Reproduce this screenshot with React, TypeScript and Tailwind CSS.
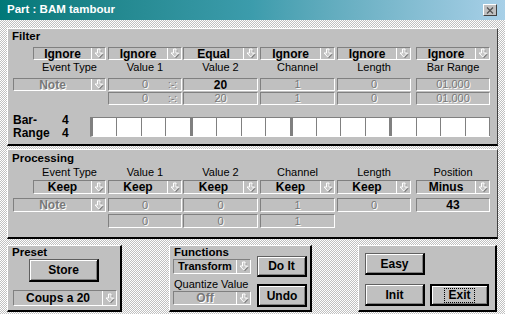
import React from "react";

const DIS = "text-[#787878] [text-shadow:1px_1px_0_#fff]";
const SUNK = "border border-[#808080] border-b-white border-r-white";

// column slots shared by every row of the Filter / Processing grids
const C = [
  "ml-[25px] w-[73px]",
  "ml-[2px] w-[74px]",
  "ml-[1px] w-[75px]",
  "ml-[2px] w-[75px]",
  "ml-[2px] w-[74px]",
  "ml-[5px] w-[74px]",
];

function Arrow() {
  return (
    <svg width="10" height="11" viewBox="0 0 10 11">
      <path d="M4 1.5h2.5v4h2.5l-3.75 4-3.75-4H4z" fill="#808080" transform="translate(0.8,0.8)" />
      <path d="M3.5 1h2.5v4h2.5l-3.75 4L1 5h2.5z" fill="#c8c8c8" stroke="#fff" strokeWidth="1" />
    </svg>
  );
}

function Drop({ text, className = "", off, small }: { text: string; className?: string; off?: boolean; small?: boolean }) {
  return (
    <div className={`flex bg-[#c0c0c0] ${SUNK} ${className}`}>
      <div
        className={`flex-1 flex items-center justify-center leading-none font-bold ${off ? DIS : ""} ${small ? "text-[11px]" : "text-[12px]"}`}
      >
        {text}
      </div>
      <div className="w-[14px] flex items-center justify-center border-l border-white">
        <Arrow />
      </div>
    </div>
  );
}

function Cell({ t, className = "", bold, suffix }: { t: string; className?: string; bold?: boolean; suffix?: boolean }) {
  return (
    <div
      className={`relative flex items-center justify-center leading-none ${SUNK} ${className} ${bold ? "font-bold text-[12px]" : `text-[11px] ${DIS}`}`}
    >
      {t}
      {suffix && <span className={`absolute right-[4px] text-[10px] ${DIS}`}>:-:</span>}
    </div>
  );
}

function Btn({ t, className = "", def, focus }: { t: string; className?: string; def?: boolean; focus?: boolean }) {
  return (
    <div
      className={`flex items-center justify-center font-bold text-[12px] bg-[#c0c0c0] shadow-[inset_1px_1px_0_#fff,inset_-1px_-1px_0_#808080] ${def ? "border-2 border-black" : "border border-[#606060] border-r-2 border-b-2 border-r-black border-b-black"} ${className}`}
    >
      {focus ? <span className="outline-1 outline-dotted outline-black px-[3px] leading-[13px]">{t}</span> : t}
    </div>
  );
}

const PANEL = "bg-[#c0c0c0] border border-white border-r-[#404040] border-b-2 border-b-black";

export default function App() {
  const barCells = Array.from({ length: 16 });
  return (
    <div className="w-[505px] h-[314px] overflow-hidden font-['Liberation_Sans',Arial,sans-serif] text-black bg-[#dcdcdc] bg-[image:repeating-conic-gradient(#c0c0c0_0%_25%,#ffffff_0%_50%)] bg-[length:2px_2px]">
      {/* title bar */}
      <div className="h-[20px] flex items-center justify-between pl-[7px] pr-[8px] bg-linear-to-r from-[#007878] via-[#3c9cac] to-[#a8d0e8]">
        <span className="text-white font-bold text-[11.5px]">Part : BAM tambour</span>
        <div className="w-[14px] h-[12px] flex items-center justify-center bg-[#c0c0c0] border border-white border-r-[#404040] border-b-[#404040]">
          <svg width="8" height="7" viewBox="0 0 8 7">
            <path d="M1 0.5l6 6M7 0.5l-6 6" stroke="#505050" strokeWidth="1.2" />
          </svg>
        </div>
      </div>

      {/* Filter */}
      <div className={`mx-[7px] mt-[8px] pb-[4px] ${PANEL}`}>
        <div className="h-[14px] pl-[4px] leading-[14px] font-bold text-[11.5px]">Filter</div>
        <div className="flex mt-[4px] h-[13px]">
          {["Ignore", "Ignore", "Equal", "Ignore", "Ignore", "Ignore"].map((t, i) => (
            <Drop key={i} text={t} className={C[i]} />
          ))}
        </div>
        <div className="flex h-[14px] items-center">
          {["Event Type", "Value 1", "Value 2", "Channel", "Length", "Bar Range"].map((t, i) => (
            <div key={i} className={`${C[i]} text-center text-[11px] leading-none`}>
              {t}
            </div>
          ))}
        </div>
        <div className="flex mt-[4px] h-[13px]">
          <Drop text="Note" off className="ml-[5px] w-[93px]" />
          <Cell t="0" suffix className={C[1]} />
          <Cell t="20" bold className={C[2]} />
          <Cell t="1" className={C[3]} />
          <Cell t="0" className={C[4]} />
          <Cell t="01.000" className={C[5]} />
        </div>
        <div className="flex mt-[1px] h-[13px]">
          <div className={C[0]} />
          <Cell t="0" suffix className={C[1]} />
          <Cell t="20" className={C[2]} />
          <Cell t="1" className={C[3]} />
          <Cell t="0" className={C[4]} />
          <Cell t="01.000" className={C[5]} />
        </div>
        <div className="flex mt-[9px] items-center">
          <div className="ml-[5px] w-[77px] font-bold text-[12px] leading-[13px]">
            <div className="flex">
              <span className="w-[49px]">Bar-</span>
              <span>4</span>
            </div>
            <div className="flex">
              <span className="w-[49px]">Range</span>
              <span>4</span>
            </div>
          </div>
          <div className="flex h-[20px] w-[400px] border-l-[3px] border-y border-[#808080] border-b-white">
            {barCells.map((_, i) => (
              <div
                key={i}
                className={`flex-1 bg-white border-[#808080] ${i % 4 === 3 && i < 15 ? "border-r-[3px]" : "border-r"}`}
              />
            ))}
          </div>
        </div>
      </div>

      {/* Processing */}
      <div className={`mx-[7px] mt-[3px] pb-[9px] ${PANEL}`}>
        <div className="pt-[1px] h-[15px] pl-[4px] leading-[14px] font-bold text-[11.5px]">Processing</div>
        <div className="flex h-[14px] items-center">
          {["Event Type", "Value 1", "Value 2", "Channel", "Length", "Position"].map((t, i) => (
            <div key={i} className={`${C[i]} text-center text-[11px] leading-none`}>
              {t}
            </div>
          ))}
        </div>
        <div className="flex mt-[1px] h-[14px]">
          {["Keep", "Keep", "Keep", "Keep", "Keep", "Minus"].map((t, i) => (
            <Drop key={i} text={t} className={C[i]} />
          ))}
        </div>
        <div className="flex mt-[4px] h-[14px]">
          <Drop text="Note" off className="ml-[5px] w-[93px]" />
          <Cell t="0" className={C[1]} />
          <Cell t="0" className={C[2]} />
          <Cell t="1" className={C[3]} />
          <Cell t="0" className={C[4]} />
          <Cell t="43" bold className={C[5]} />
        </div>
        <div className="flex mt-[2px] h-[14px]">
          <div className={C[0]} />
          <Cell t="0" className={C[1]} />
          <Cell t="0" className={C[2]} />
          <Cell t="1" className={C[3]} />
        </div>
      </div>

      {/* bottom row */}
      <div className="flex mt-[6px] ml-[7px] items-start">
        <div className={`w-[115px] h-[67px] ${PANEL} border-r-2 border-r-black`}>
          <div className="h-[13px] pl-[4px] leading-[13px] font-bold text-[11.5px]">Preset</div>
          <Btn t="Store" className="ml-[21px] w-[70px] h-[23px]" />
          <Drop text="Coups a 20" className="ml-[5px] mt-[8px] w-[104px] h-[16px]" />
        </div>

        <div className={`ml-[47px] w-[143px] h-[67px] flex ${PANEL} border-r-2 border-r-black`}>
          <div className="flex flex-col">
            <div className="h-[13px] pl-[4px] leading-[13px] font-bold text-[11.5px]">Functions</div>
            <Drop text="Transform" small className="ml-[3px] w-[78px] h-[15px]" />
            <div className="mt-[3px] h-[14px] pl-[4px] text-[11px] leading-[14px]">Quantize Value</div>
            <Drop text="Off" off className="ml-[3px] w-[78px] h-[14px]" />
          </div>
          <div className="flex flex-col ml-[6px]">
            <Btn t="Do It" className="mt-[10px] w-[50px] h-[21px]" />
            <Btn t="Undo" def className="mt-[7px] w-[50px] h-[23px]" />
          </div>
        </div>

        <div className={`ml-[46px] w-[139px] h-[67px] ${PANEL} border-r-2 border-r-black`}>
          <Btn t="Easy" className="ml-[6px] mt-[7px] w-[60px] h-[22px]" />
          <div className="flex mt-[9px]">
            <Btn t="Init" className="ml-[6px] w-[60px] h-[22px]" />
            <Btn t="Exit" def focus className="ml-[5px] w-[59px] h-[22px]" />
          </div>
        </div>
      </div>
    </div>
  );
}
